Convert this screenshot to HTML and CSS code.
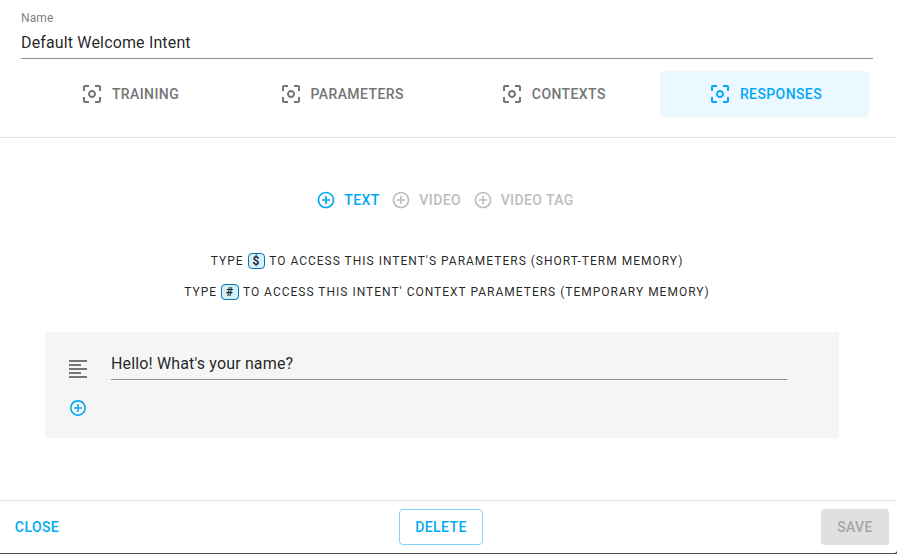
FILE: index.html
```html
<!DOCTYPE html>
<html lang="en">
<head>
<meta charset="utf-8">
<title>Intent</title>
<link rel="stylesheet" href="styles.css">
</head>
<body>
<svg class="defs" aria-hidden="true">
  <symbol id="focus" viewBox="0 0 24 24"><path d="M5 15H3v4c0 1.1.9 2 2 2h4v-2H5v-4zM5 5h4V3H5c-1.1 0-2 .9-2 2v4h2V5zm14-2h-4v2h4v4h2V5c0-1.1-.9-2-2-2zm0 16h-4v2h4c1.1 0 2-.9 2-2v-4h-2v4zM12 8c-2.21 0-4 1.79-4 4s1.79 4 4 4 4-1.79 4-4-1.79-4-4-4zm0 6c-1.1 0-2-.9-2-2s.9-2 2-2 2 .9 2 2-.9 2-2 2z"/></symbol>
  <symbol id="add" viewBox="0 0 24 24"><path d="M13 7h-2v4H7v2h4v4h2v-4h4v-2h-4V7zm-1-5C6.48 2 2 6.48 2 12s4.48 10 10 10 10-4.48 10-10S17.52 2 12 2zm0 18c-4.41 0-8-3.59-8-8s3.59-8 8-8 8 3.59 8 8-3.59 8-8 8z"/></symbol>
  <symbol id="lines" viewBox="0 0 24 24"><path d="M15 15H3v2h12v-2zm0-8H3v2h12V7zM3 13h18v-2H3v2zm0 8h18v-2H3v2zM3 3v2h18V3H3z"/></symbol>
</svg>
<div class="dialog">
  <header class="head">
    <div class="label">Name</div>
    <div class="field">Default Welcome Intent</div>
    <nav class="tabs">
      <div class="tab"><svg><use href="#focus"/></svg><span>TRAINING</span></div>
      <div class="tab"><svg><use href="#focus"/></svg><span>PARAMETERS</span></div>
      <div class="tab"><svg><use href="#focus"/></svg><span>CONTEXTS</span></div>
      <div class="tab active"><svg><use href="#focus"/></svg><span>RESPONSES</span></div>
    </nav>
  </header>
  <main class="body">
    <div class="types">
      <div class="type on"><svg><use href="#add"/></svg><span>TEXT</span></div>
      <div class="type"><svg><use href="#add"/></svg><span>VIDEO</span></div>
      <div class="type"><svg><use href="#add"/></svg><span>VIDEO TAG</span></div>
    </div>
    <div class="tips">
      <p>TYPE <kbd>$</kbd> TO ACCESS THIS INTENT'S PARAMETERS (SHORT-TERM MEMORY)</p>
      <p>TYPE <kbd>#</kbd> TO ACCESS THIS INTENT' CONTEXT PARAMETERS (TEMPORARY MEMORY)</p>
    </div>
    <section class="card">
      <div class="row">
        <svg class="lines"><use href="#lines"/></svg>
        <div class="field reply">Hello! What's your name?</div>
      </div>
      <svg class="more"><use href="#add"/></svg>
    </section>
  </main>
  <footer class="foot">
    <div class="btn close">CLOSE</div>
    <div class="btn delete">DELETE</div>
    <div class="btn save">SAVE</div>
  </footer>
</div>
</body>
</html>
```
FILE: styles.css
```css
* { box-sizing: border-box; }
body { margin: 0; background: #505050; font-family: Roboto, sans-serif; color: rgba(0,0,0,.87); }
svg { fill: currentColor; flex: none; display: block; }
.defs { display: none; }
.dialog { height: 553px; background: #fff; display: flex; flex-direction: column; border-bottom-right-radius: 3px; }
.head { height: 138px; padding: 11px 24px 0 21px; border-bottom: 1px solid #e0e0e0; }
.label { font-size: 12px; line-height: 14px; letter-spacing: .11px; color: rgba(0,0,0,.54); }
.field { height: 34px; padding-top: 8px; font-size: 16px; line-height: 19px; letter-spacing: .15px; border-bottom: 1px solid #8e8e8e; }
.tabs { display: flex; justify-content: space-between; margin-top: 12px; padding: 0 4px; }
.tab { width: 209px; height: 46px; display: flex; align-items: center; justify-content: center; gap: 8px; border-radius: 4px; color: #757575; font-size: 14px; font-weight: 500; letter-spacing: .4px; }
.tab svg { width: 24px; height: 24px; }
.tab.active { padding-left: 1px; background: #ebf8ff; color: #03a9f4; }
.body { flex: 1; display: flex; flex-direction: column; padding: 44px 58px 0 45px; }
.types { height: 36px; display: flex; justify-content: center; gap: 11.6px; padding-left: 6px; }
.type { display: flex; align-items: center; gap: 8px; color: #bdbdbd; font-size: 14px; font-weight: 500; letter-spacing: .4px; }
.type svg { width: 20px; height: 20px; }
.type.on { color: #03a9f4; }
.tips { margin: 28px -58px 0 -45px; padding-right: 3px; text-align: center; font-size: 12px; letter-spacing: 1px; }
.tips p { margin: 0; height: 31px; line-height: 31px; }
kbd { display: inline-block; height: 16px; padding: 0 4px; border: 1px solid #0277a8; border-radius: 4px; background: #d3f0fc; font: bold 12px/14px Roboto, sans-serif; letter-spacing: 1px; }
.card { height: 106px; margin-top: 24px; padding: 14px 52px 0 21px; background: #f5f5f5; }
.row { display: flex; align-items: flex-end; gap: 21px; }
.lines { width: 24px; height: 24px; color: #757575; margin-bottom: -1px; }
.reply { flex: 1; }
.more { width: 20px; height: 20px; padding: .5px; margin: 18px 0 0 2px; color: #03a9f4; }
.foot { height: 53px; display: flex; justify-content: space-between; align-items: center; padding: 0 8px 0 7px; border-top: 1px solid #e0e0e0; }
.btn { height: 36px; display: flex; align-items: center; justify-content: center; border-radius: 4px; font-size: 14px; font-weight: 500; letter-spacing: .4px; color: #03a9f4; }
.close { width: 60px; }
.delete { width: 84px; border: 1px solid #81d4fa; margin-left: -6px; }
.save { width: 68px; background: #e0e0e0; color: #a6a6a6; }
```
